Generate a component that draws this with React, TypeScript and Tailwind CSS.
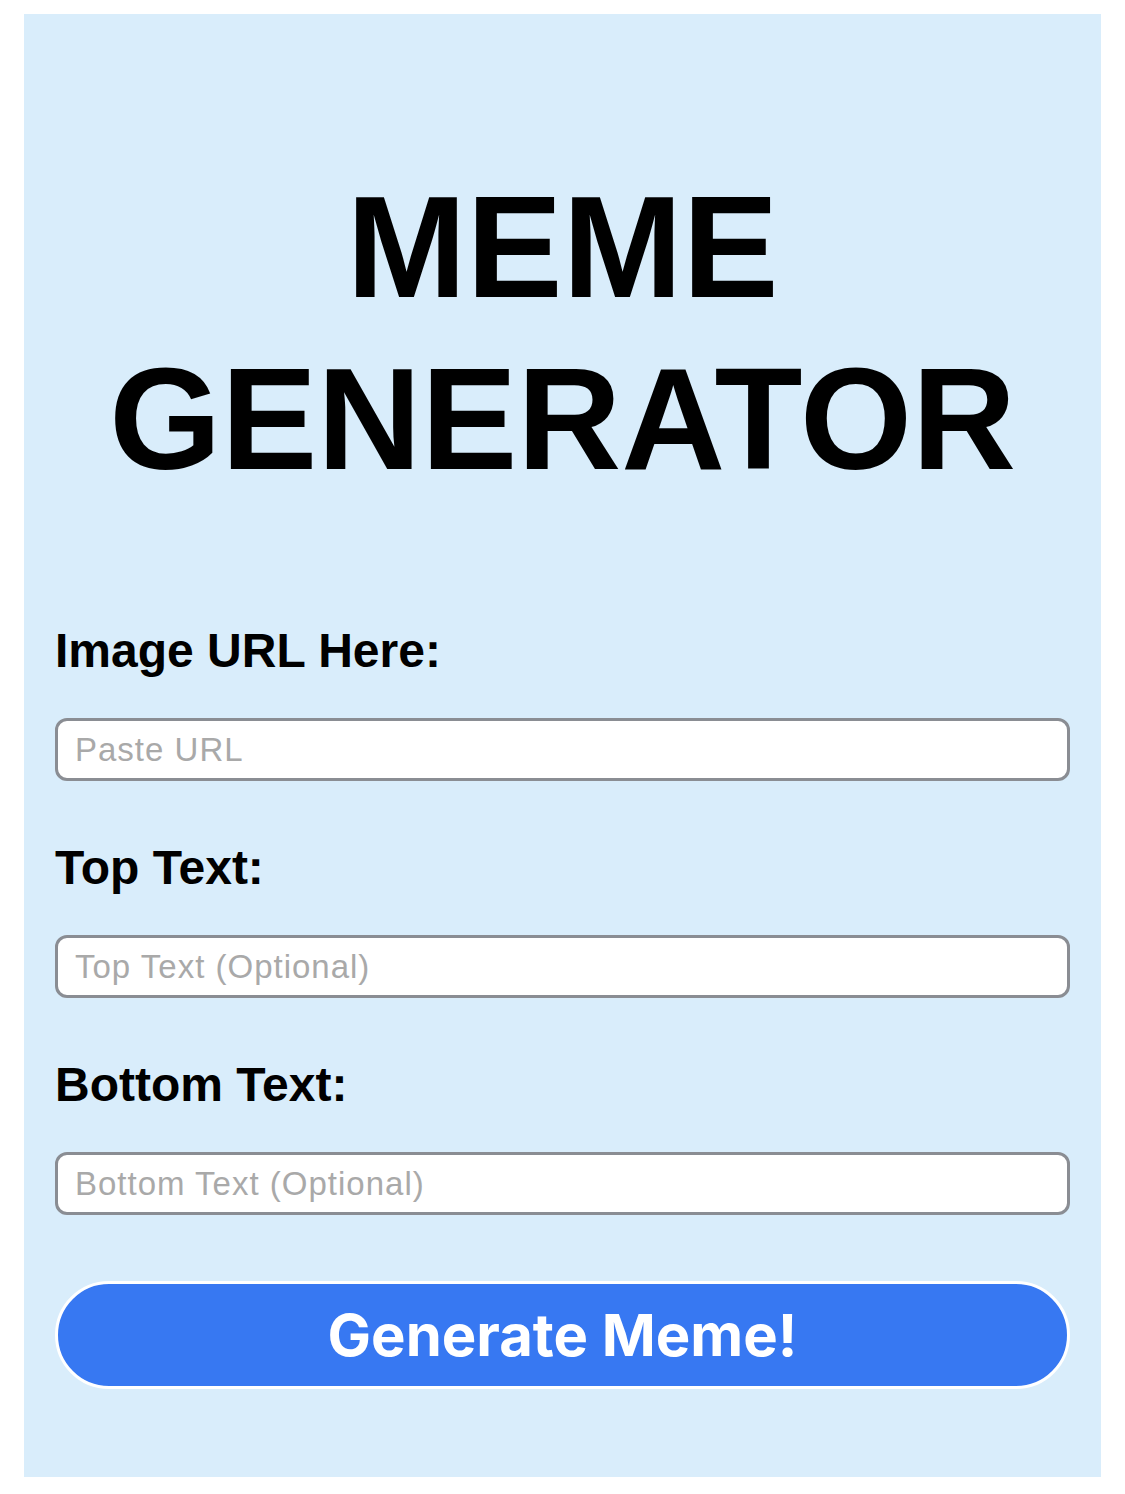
import React, { useState } from 'react';

const fields = [
  { label: 'Image URL Here:', placeholder: 'Paste URL' },
  { label: 'Top Text:', placeholder: 'Top Text (Optional)' },
  { label: 'Bottom Text:', placeholder: 'Bottom Text (Optional)' },
];

const App: React.FC = () => {
  const [values, setValues] = useState<string[]>(['', '', '']);

  const update = (i: number, v: string) =>
    setValues((prev) => prev.map((p, idx) => (idx === i ? v : p)));

  return (
    <div className="min-h-screen bg-white px-6 pt-[14px] pb-[17px]">
      {/* Main panel */}
      <div className="bg-[#d9edfb] px-[31px] pt-[148px] pb-[88px] font-['Liberation_Sans',Arial,sans-serif]">
        <h1 className="text-center text-[144px] leading-[172px] font-bold text-black">
          MEME
          <br />
          GENERATOR
        </h1>

        <form className="mt-[118px] flex flex-col" onSubmit={(e) => e.preventDefault()}>
          {fields.map((f, i) => (
            <div key={f.label} className={i > 0 ? 'mt-[60px]' : ''}>
              <label className="block text-[48px] leading-[54px] font-bold text-black">
                {f.label}
              </label>
              <input
                type="text"
                value={values[i]}
                onChange={(e) => update(i, e.target.value)}
                placeholder={f.placeholder}
                className="mt-[40px] block h-[63px] w-full rounded-[12px] border-[3px] border-[#8a8d93] bg-white pl-[17px] text-[33px] tracking-[1px] text-black placeholder:text-[#a9a9a9] focus:outline-none"
              />
            </div>
          ))}

          <button
            type="submit"
            className="mt-[66px] h-[108px] w-full rounded-full border-[3px] border-white bg-[#3778f2] text-[58px] font-bold text-white font-['Inter',sans-serif]"
          >
            Generate Meme!
          </button>
        </form>
      </div>
    </div>
  );
};

export default App;
